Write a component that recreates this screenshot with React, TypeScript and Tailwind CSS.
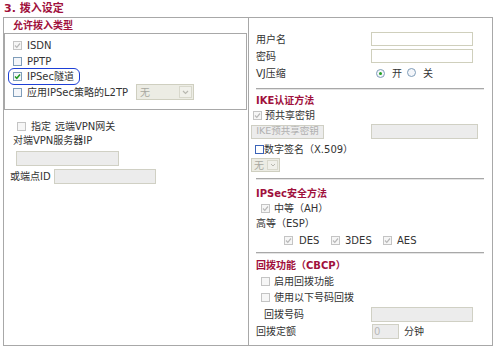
import React from "react";

type CbKind = "dchk" | "un" | "chk" | "dun" | "blue";

function Cb({ kind, cls = "" }: { kind: CbKind; cls?: string }) {
  const border =
    kind === "dchk" || kind === "dun"
      ? "border-[#c4c4c4] bg-[#f6f6f6]"
      : kind === "blue"
      ? "border-[#3a63b8] bg-white"
      : "border-[#7f9db9] bg-[#f4f6fa]";
  return (
    <span className={`inline-flex items-center justify-center w-[9px] h-[9px] border shrink-0 ${border} ${cls}`}>
      {kind === "dchk" && (
        <svg width="7" height="7" viewBox="0 0 7 7">
          <path d="M1 3.5 L2.8 5.3 L6 1.5" stroke="#b8b8b8" strokeWidth="1.2" fill="none" />
        </svg>
      )}
      {kind === "chk" && (
        <svg width="7" height="7" viewBox="0 0 7 7">
          <path d="M1 3.5 L2.8 5.3 L6 1.5" stroke="#1f9a1f" strokeWidth="1.5" fill="none" />
        </svg>
      )}
    </span>
  );
}

function Radio({ on }: { on?: boolean }) {
  return (
    <span className="inline-flex items-center justify-center w-[9px] h-[9px] rounded-full border border-[#7f9db9] bg-[#f4f6fa] shrink-0">
      {on && <span className="w-[3px] h-[3px] rounded-full bg-[#22a022]" />}
    </span>
  );
}

function Hr() {
  return (
    <div className="ml-[7px] w-[228px] h-[2px] border-t border-[#a8a8a8] border-b border-b-[#e4e4e4]" />
  );
}

const red = "text-[#a0103c] font-bold";

export default function App() {
  return (
    <div
      className="w-[497px] h-[351px] bg-white overflow-hidden text-[10px] text-[#333]"
      style={{ fontFamily: '"DejaVu Sans", "Noto Sans CJK SC", sans-serif' }}
    >
      <div className={`h-[17px] pl-[4px] pt-[2px] leading-[13px] text-[11px] ${red}`}>3. 拨入设定</div>
      <div className="ml-[3px] w-[490px] h-[329px] border border-[#a8a8a8] flex">
        {/* left */}
        <div className="w-[245px] border-r border-[#a8a8a8] flex flex-col">
          <div className={`h-[15px] leading-[15px] pl-[9px] ${red}`}>允许拨入类型</div>
          <div className="w-[243px] h-[77px] border border-[#a8a8a8] pt-[4px] pl-[8px] flex flex-col">
            <div className="h-[15.5px] flex items-center gap-[5px]">
              <Cb kind="dchk" />
              <span>ISDN</span>
            </div>
            <div className="h-[15.5px] flex items-center gap-[5px]">
              <Cb kind="un" />
              <span>PPTP</span>
            </div>
            <div className="h-[15.5px] flex items-center gap-[5px] relative">
              <span className="absolute left-[-5px] top-[-1px] w-[72px] h-[17px] rounded-[6px] border-[1.5px] border-[#1d3fd6]" />
              <Cb kind="chk" />
              <span>IPSec隧道</span>
            </div>
            <div className="h-[15.5px] flex items-center gap-[5px]">
              <Cb kind="un" />
              <span>应用IPSec策略的L2TP</span>
              <span className="ml-[3px] w-[58px] h-[16px] border border-[#cfcfc0] bg-[#ecece4] flex items-center justify-between pl-[3px] pr-[1px] text-[#a8a8a0]">
                <span>无</span>
                <span className="w-[13px] h-[12px] border border-[#d8d8cc] bg-[#f0f0ea] flex items-center justify-center">
                  <svg width="7" height="5" viewBox="0 0 7 5">
                    <path d="M1 1 L3.5 3.5 L6 1" stroke="#b8b8b0" strokeWidth="1.2" fill="none" />
                  </svg>
                </span>
              </span>
            </div>
          </div>
          <div className="mt-[9px] h-[14px] flex items-center pl-[13px]">
            <Cb kind="dun" />
            <span className="ml-[5px]">指定</span>
            <span className="ml-[4px]">远端VPN网关</span>
          </div>
          <div className="h-[15px] flex items-center pl-[9px]">对端VPN服务器IP</div>
          <div className="mt-[3px] ml-[12px] w-[103px] h-[15px] border border-[#d0d0c4] bg-[#ececec]" />
          <div className="mt-[3px] h-[15px] flex items-center pl-[6px]">
            <span className="w-[44px]">或端点ID</span>
            <span className="w-[102px] h-[15px] border border-[#d0d0c4] bg-[#ececec]" />
          </div>
        </div>
        {/* right */}
        <div className="flex-1 flex flex-col pt-[14px]">
          <div className="h-[14px] flex items-center">
            <span className="pl-[7px] w-[122px]">用户名</span>
            <span className="w-[102px] h-[14px] border border-[#cfcfbc] bg-white" />
          </div>
          <div className="mt-[3px] h-[14px] flex items-center">
            <span className="pl-[7px] w-[122px]">密码</span>
            <span className="w-[102px] h-[14px] border border-[#cfcfbc] bg-white" />
          </div>
          <div className="mt-[2px] h-[16px] flex items-center">
            <span className="pl-[7px] w-[127px]">VJ压缩</span>
            <Radio on />
            <span className="ml-[7px]">开</span>
            <span className="ml-[5px]"><Radio /></span>
            <span className="ml-[7px]">关</span>
          </div>
          <div className="mt-[7px]">
            <Hr />
          </div>
          <div className={`mt-[4px] h-[14px] leading-[14px] pl-[7px] ${red}`}>IKE认证方法</div>
          <div className="h-[14px] flex items-center pl-[4px]">
            <Cb kind="dchk" />
            <span className="ml-[3px]">预共享密钥</span>
          </div>
          <div className="mt-[2px] h-[15px] flex items-center">
            <span className="ml-[2px] w-[73px] h-[14px] border border-[#cfcfc4] bg-[#ececec] text-[#b0b0b0] text-[9.5px] flex items-center justify-center">
              IKE预共享密钥
            </span>
            <span className="ml-[47px] w-[107px] h-[15px] border border-[#d0d0c4] bg-[#ececec]" />
          </div>
          <div className="mt-[3px] h-[14px] flex items-center pl-[6px]">
            <Cb kind="blue" />
            <span className="ml-[0px]">数字签名（X.509）</span>
          </div>
          <div className="mt-[2px] ml-[2px] w-[29px] h-[14px] border border-[#cfcfc0] bg-[#ecece4] flex items-center justify-between pl-[2px] pr-[1px] text-[#a8a8a0]">
            <span>无</span>
            <span className="w-[11px] h-[10px] border border-[#d8d8cc] bg-[#f0f0ea] flex items-center justify-center">
              <svg width="6" height="4" viewBox="0 0 6 4">
                <path d="M1 1 L3 3 L5 1" stroke="#b8b8b0" strokeWidth="1" fill="none" />
              </svg>
            </span>
          </div>
          <div className="mt-[6px]">
            <Hr />
          </div>
          <div className={`mt-[7px] h-[14px] leading-[14px] pl-[7px] ${red}`}>IPSec安全方法</div>
          <div className="h-[14px] flex items-center pl-[12px]">
            <Cb kind="dchk" />
            <span className="ml-[4px]">中等（AH）</span>
          </div>
          <div className="mt-[1px] h-[14px] flex items-center pl-[7px]">高等（ESP）</div>
          <div className="mt-[3px] h-[14px] flex items-center pl-[35px]">
            <Cb kind="dchk" />
            <span className="ml-[6px] w-[32px]">DES</span>
            <Cb kind="dchk" />
            <span className="ml-[5px] w-[38px]">3DES</span>
            <Cb kind="dchk" />
            <span className="ml-[5px]">AES</span>
          </div>
          <div className="mt-[5px]">
            <Hr />
          </div>
          <div className={`mt-[5px] h-[14px] leading-[14px] pl-[7px] ${red}`}>回拨功能（CBCP）</div>
          <div className="mt-[1px] h-[14px] flex items-center pl-[12px]">
            <Cb kind="dun" />
            <span className="ml-[4px]">启用回拨功能</span>
          </div>
          <div className="mt-[2px] h-[14px] flex items-center pl-[12px]">
            <Cb kind="dun" />
            <span className="ml-[4px]">使用以下号码回拨</span>
          </div>
          <div className="mt-[3px] h-[15px] flex items-center">
            <span className="pl-[15px] w-[122px]">回拨号码</span>
            <span className="w-[102px] h-[15px] border border-[#d0d0c4] bg-[#ececec]" />
          </div>
          <div className="mt-[2px] h-[15px] flex items-center">
            <span className="pl-[7px] w-[123px]">回拨定额</span>
            <span className="w-[27px] h-[15px] border border-[#d0d0c4] bg-[#ececec] text-[#b8b8b8] pl-[1px] leading-[13px]">0</span>
            <span className="ml-[5px]">分钟</span>
          </div>
        </div>
      </div>
    </div>
  );
}
